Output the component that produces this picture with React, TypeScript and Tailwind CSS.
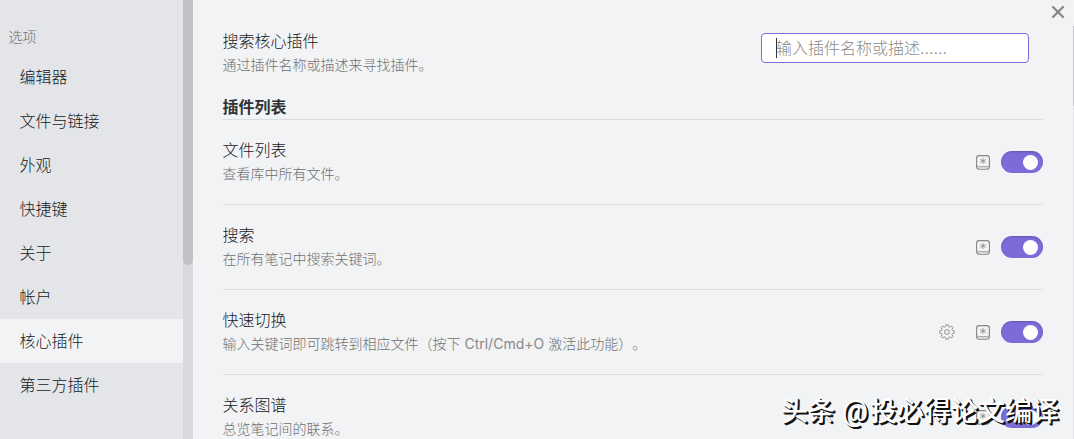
import type { ReactNode } from 'react';
import { X } from 'lucide-react';

const menuItems = [
  '编辑器',
  '文件与链接',
  '外观',
  '快捷键',
  '关于',
  '帐户',
  '核心插件',
  '第三方插件',
];

const plugins = [
  { name: '文件列表', desc: '查看库中所有文件。', options: false },
  { name: '搜索', desc: '在所有笔记中搜索关键词。', options: false },
  {
    name: '快速切换',
    desc: (
      <>
        输入关键词即可跳转到相应文件（按下 <span className="font-normal text-[#888888]">Ctrl/Cmd+O</span> 激活此功能）。
      </>
    ),
    options: true,
  },
  { name: '关系图谱', desc: '总览笔记间的联系。', options: false },
];

function HotkeyIcon() {
  return (
    <svg width="14" height="15" viewBox="0 0 14 15" fill="none" stroke="#858585">
      <rect x="0.6" y="0.6" width="12.8" height="13.6" rx="2.6" strokeWidth="1.1" />
      <path d="M1 10.6c.5 1 1.300 1.200 2.200 1.200h7.600c.9 0 1.700-.2 2.200-1.200" strokeWidth="0.9" />
      <path d="M7 3v6M4.200 4.500l5.600 3M9.800 4.500l-5.600 3" strokeWidth="0.8" />
    </svg>
  );
}

function GearIcon() {
  return (
    <svg width="16" height="16" viewBox="0 0 16 16" fill="none" stroke="#909090" strokeLinejoin="round">
      <path
        d="M6.800 .8h2.400l.4 1.900 1.200.5 1.700-1.100 1.500 1.500-1.100 1.700.5 1.200 1.800.4v2.200l-1.800.4-.5 1.200 1.100 1.700-1.500 1.500-1.700-1.100-1.200.5-.4 1.900H6.800l-.4-1.900-1.200-.5-1.700 1.100L2 12.400l1.100-1.700-.5-1.200L.8 9.100V6.900l1.800-.4.5-1.200L2 3.600l1.500-1.500 1.700 1.100 1.200-.5z"
        strokeWidth="1"
      />
      <circle cx="8" cy="8" r="2.400" strokeWidth="1" />
    </svg>
  );
}

function Toggle() {
  return (
    <div className="w-[42px] h-[22px] rounded-full bg-[#7b6cd9] flex items-center justify-end pr-[5px] shadow-[inset_0_1px_2px_rgba(0,0,0,0.2)]">
      <div className="w-[15px] h-[15px] rounded-full bg-white" />
    </div>
  );
}

function SettingInfo({ name, desc }: { name: string; desc: ReactNode }) {
  return (
    <div className="-ml-[0.5px]">
      <div className="text-base leading-6">{name}</div>
      <div className="text-sm leading-6 text-[#707070]">{desc}</div>
    </div>
  );
}

function SettingRow({ children }: { children: ReactNode }) {
  return (
    <div className="h-[85px] pt-[18px] border-b border-[#dcddde] flex justify-between items-start">
      {children}
    </div>
  );
}

export default function App() {
  return (
    <div className="relative flex w-[1074px] h-[439px] overflow-hidden bg-[#f2f3f5] font-[Inter,'Noto_Sans_CJK_SC',sans-serif] font-light text-[#15191d] whitespace-nowrap [text-spacing-trim:space-all]">
      {/* Sidebar */}
      <nav className="w-[183px] shrink-0 bg-[#e3e5e8] pt-[25px]">
        <div className="h-[30px] pl-[8.5px] text-sm leading-6 text-[#707070]">选项</div>
        {menuItems.map((item) => (
          <div
            key={item}
            className={`h-11 pl-[19.5px] text-base leading-[44px] ${
              item === '核心插件' ? 'bg-[#f2f3f5]' : ''
            }`}
          >
            {item}
          </div>
        ))}
      </nav>
      <div className="w-[10px] shrink-0 bg-[#d7d9dc]">
        <div className="h-[265px] rounded-b-[5px] bg-[#c1c2c4]" />
      </div>

      {/* Core plugin settings */}
      <main className="w-[850px] shrink-0 pl-[30px]">
        <div className="h-[94px] pt-[29px] pr-[14px] flex justify-between items-start">
          <SettingInfo name="搜索核心插件" desc="通过插件名称或描述来寻找插件。" />
          <div className="mt-1 w-[268px] h-[30px] rounded border border-[#7b6cd9] bg-white pl-[14px] flex items-center">
            <span className="w-px h-5 bg-[#2e3338]" />
            <span className="-ml-px text-base leading-6 text-[#8a8a8a]">输入插件名称或描述......</span>
          </div>
        </div>
        <h2 className="h-[26px] border-b border-[#dcddde] text-base leading-[26px] font-bold text-[#2e3338]">
          <span className="-ml-[0.5px]">插件列表</span>
        </h2>
        {plugins.map((plugin) => (
          <SettingRow key={plugin.name}>
            <SettingInfo name={plugin.name} desc={plugin.desc} />
            <div className="mt-[13px] h-[22px] flex items-center">
              {plugin.options && (
                <div className="mr-[21px]">
                  <GearIcon />
                </div>
              )}
              <div className="mr-[11px]">
                <HotkeyIcon />
              </div>
              <Toggle />
            </div>
          </SettingRow>
        ))}
      </main>

      <X className="absolute left-[1048px] top-[2px] w-5 h-5 text-[#888888]" strokeWidth={2.8} />
      <div className="absolute right-0 top-[26px] w-px h-[413px] bg-[#e4e5e8]">
        <div className="h-[80px] bg-[#c6c7ca]" />
      </div>

      {/* Watermark */}
      <div className="absolute left-[781px] top-[391px] text-[27px] leading-10 font-medium text-white [text-shadow:1px_1px_0_#111,2px_2px_0_#111]">
        头条<span className="ml-[7px] mr-[2px] font-[Roboto] font-normal text-[29px]">@</span>投必得论文编译
      </div>
    </div>
  );
}
